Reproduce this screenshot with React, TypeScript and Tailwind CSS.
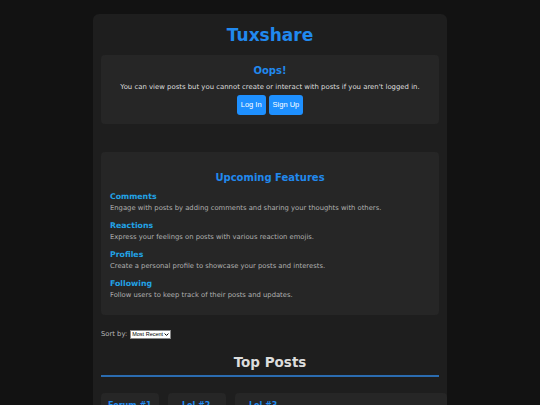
export default function App() {
  const features = [
    { title: 'Comments', text: 'Engage with posts by adding comments and sharing your thoughts with others.' },
    { title: 'Reactions', text: 'Express your feelings on posts with various reaction emojis.' },
    { title: 'Profiles', text: 'Create a personal profile to showcase your posts and interests.' },
    { title: 'Following', text: 'Follow users to keep track of their posts and updates.' },
  ]

  return (
    <div className="h-[405px] overflow-hidden bg-[#121212] pt-[14px] font-['DejaVu_Sans',sans-serif]">
      <div className="mx-auto w-[354px] min-h-[420px] rounded-md bg-[#1e1e1e] px-2 pt-[10px]">
        <h1 className="text-center text-[17px] leading-[22px] font-bold text-[#2189ee]">Tuxshare</h1>

        <div className="mt-[9px] h-[69px] rounded-[4px] bg-[#262626] pt-[9px] text-center">
          <h2 className="text-[10px] leading-[14px] font-bold text-[#2189ee]">Oops!</h2>
          <p className="mt-[3px] text-[6.9px] leading-[12px] text-[#dedede]">
            You can view posts but you cannot create or interact with posts if you aren't logged in.
          </p>
          <div className="mt-[2px] flex justify-center gap-[3px] font-['Liberation_Sans',sans-serif]">
            <button className="h-[20px] rounded-[3px] bg-[#1e90ff] px-[4px] text-[7.5px] text-white">Log In</button>
            <button className="h-[20px] rounded-[3px] bg-[#1e90ff] px-[4px] text-[7.5px] text-white">Sign Up</button>
          </div>
        </div>

        <div className="mt-[28px] h-[163px] rounded-[4px] bg-[#262626] px-[9px] pt-[19px]">
          <h2 className="text-center text-[10px] leading-[14px] font-bold text-[#2189ee]">Upcoming Features</h2>
          <div className="mt-[6px] flex flex-col gap-[5px]">
            {features.map((f) => (
              <div key={f.title}>
                <h3 className="text-[7.8px] leading-[11px] font-bold text-[#22a3e6]">{f.title}</h3>
                <p className="text-[6.8px] leading-[13px] text-[#b0b0b0]">{f.text}</p>
              </div>
            ))}
          </div>
        </div>

        <div className="mt-[14px] flex h-[10px] items-center gap-[3px] text-[6.8px] text-[#b8b8b8]">
          <span>Sort by:</span>
          <div className="flex h-[9px] w-[41px] items-center justify-between border border-[#888] bg-white px-[1px] font-['Liberation_Sans',sans-serif] text-[5.5px] leading-[8px] text-black">
            <span>Most Recent</span>
            <svg viewBox="0 0 8 8" className="h-[5px] w-[5px]">
              <path d="M1 2.5 L4 5.5 L7 2.5" fill="none" stroke="black" strokeWidth="1.6" />
            </svg>
          </div>
        </div>

        <h2 className="mt-[14px] text-center text-[13.5px] leading-[18px] font-bold text-[#dcdcdc]">Top Posts</h2>
        <div className="mt-[4px] h-[2px] bg-[#2b6cb0]" />

        <div className="mt-[16px] flex gap-[9px]">
          <div className="h-[40px] w-[58px] shrink-0 whitespace-nowrap rounded-[4px] bg-[#262626] px-[7px] pt-[8px] text-[8px] leading-[10px] font-bold text-[#2189ee]">Forum #1</div>
          <div className="h-[40px] w-[58px] shrink-0 whitespace-nowrap rounded-[4px] bg-[#262626] px-[14px] pt-[8px] text-[8px] leading-[10px] font-bold text-[#2189ee]">Lol #2</div>
          <div className="h-[40px] w-[212px] shrink-0 whitespace-nowrap rounded-[4px] bg-[#262626] px-[14px] pt-[8px] text-[8px] leading-[10px] font-bold text-[#2189ee]">Lol #3</div>
        </div>
      </div>
    </div>
  )
}
